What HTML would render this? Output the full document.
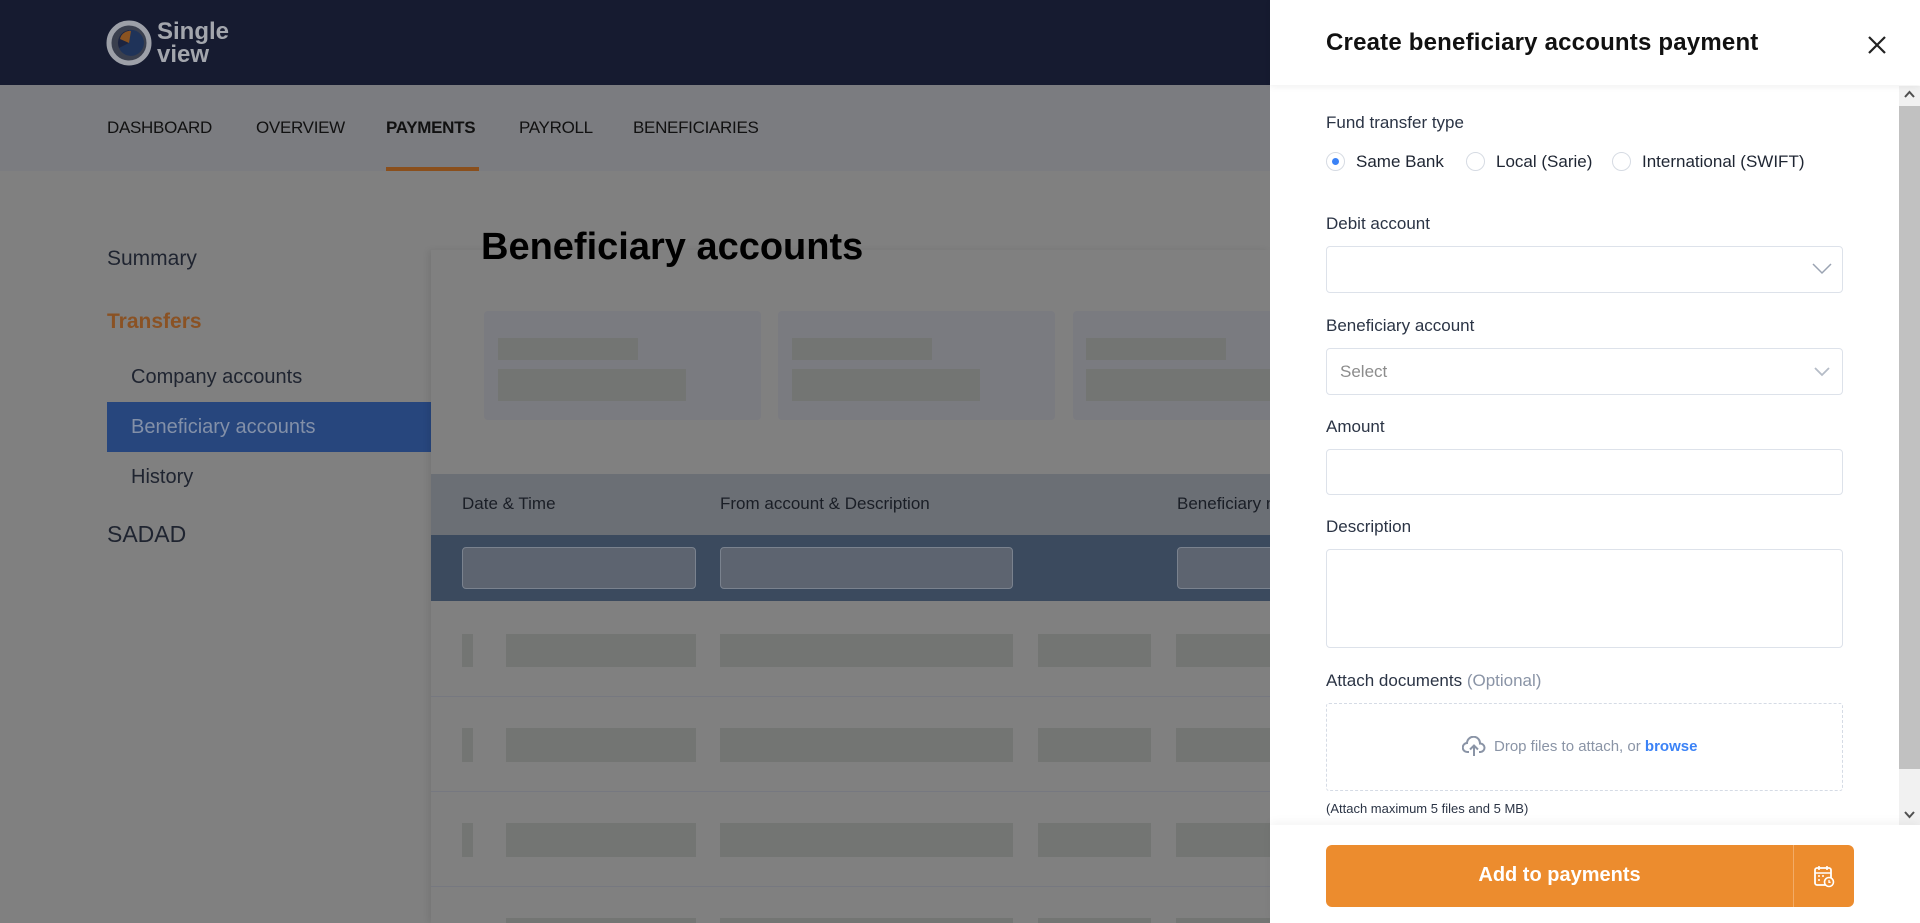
<!DOCTYPE html>
<html><head><meta charset="utf-8"><style>
*{box-sizing:border-box;margin:0;padding:0}
body{width:1920px;height:923px;overflow:hidden;background:#808080;font-family:"Liberation Sans",sans-serif;position:relative}
.a{position:absolute}
.top{left:0;top:0;width:1270px;height:85px;background:#161b30}
.nav{left:0;top:85px;width:1270px;height:86px;background:#7b7c80}
.nav span{position:absolute;top:33px;font-size:17px;color:#111;letter-spacing:-0.3px}
.side{font-size:21px;color:#1f2430}
.sk{background:#737573}
.card{background:#7a7b80;border-radius:4px}
.panel{left:1270px;top:0;width:650px;height:923px;background:#fff}
.lbl{font-size:17px;color:#2b3445;position:absolute;left:56px}
.inp{position:absolute;left:56px;width:517px;border:1px solid #dde2ea;border-radius:4px;background:#fff}
.radio{position:absolute;top:152px;width:19px;height:19px;border:1px solid #d6dbe3;border-radius:50%}
.rt{position:absolute;top:152px;font-size:17px;color:#1f2633}
</style></head><body>
<div class="a top"></div>
<svg class="a" style="left:106px;top:20px" width="46" height="46" viewBox="0 0 46 46"><circle cx="23" cy="23" r="20" fill="#3a3f4e" stroke="#9da0a8" stroke-width="5"/><path d="M23 10 A13 13 0 1 1 13 28 L23 23Z" fill="#1f3359"/><path d="M13 28 A13 13 0 0 1 23 10 L23 23Z" fill="#1c2440"/><path d="M14 19 A10 10 0 0 1 25 11 L23 23Z" fill="#8a5320"/></svg>
<div class="a" style="left:157px;top:20px;font-size:24px;font-weight:bold;color:#a3a6ad;line-height:23px">Single<br>view</div>
<div class="a nav">
<span style="left:107px">DASHBOARD</span><span style="left:256px">OVERVIEW</span><span style="left:386px;font-weight:bold">PAYMENTS</span><span style="left:519px">PAYROLL</span><span style="left:633px">BENEFICIARIES</span>
<div class="a" style="left:386px;top:82px;width:93px;height:4px;background:#8a4f1c"></div></div>
<div class="a side" style="left:107px;top:247px">Summary</div>
<div class="a side" style="left:107px;top:310px;color:#8a5224;font-weight:bold">Transfers</div>
<div class="a side" style="left:131px;top:366px;font-size:20px">Company accounts</div>
<div class="a" style="left:107px;top:402px;width:324px;height:50px;background:#27467d"></div>
<div class="a side" style="left:131px;top:416px;font-size:20px;color:#8390a8">Beneficiary accounts</div>
<div class="a side" style="left:131px;top:466px;font-size:20px">History</div>
<div class="a side" style="left:107px;top:521px;font-size:23px">SADAD</div>
<div class="a" style="left:431px;top:250px;width:839px;height:673px;box-shadow:-3px 0 6px rgba(0,0,0,0.08)"></div>
<div class="a" style="left:481px;top:226px;font-size:38px;font-weight:bold;color:#000">Beneficiary accounts</div>
<div class="a card" style="left:484px;top:311px;width:277px;height:109px"></div>
<div class="a card" style="left:778px;top:311px;width:277px;height:109px"></div>
<div class="a card" style="left:1073px;top:311px;width:200px;height:109px"></div>
<div class="a sk" style="left:498px;top:338px;width:140px;height:22px"></div><div class="a sk" style="left:498px;top:369px;width:188px;height:32px"></div>
<div class="a sk" style="left:792px;top:338px;width:140px;height:22px"></div><div class="a sk" style="left:792px;top:369px;width:188px;height:32px"></div>
<div class="a sk" style="left:1086px;top:338px;width:140px;height:22px"></div><div class="a sk" style="left:1086px;top:369px;width:184px;height:32px"></div>
<div class="a" style="left:431px;top:474px;width:839px;height:61px;background:#6b6f75"></div>
<div class="a" style="left:462px;top:494px;font-size:17px;color:#1a1e26">Date &amp; Time</div>
<div class="a" style="left:720px;top:494px;font-size:17px;color:#1a1e26">From account &amp; Description</div>
<div class="a" style="left:1177px;top:494px;font-size:17px;color:#1a1e26">Beneficiary n</div>
<div class="a" style="left:431px;top:535px;width:839px;height:66px;background:#3b4a5e"></div>
<div class="a" style="left:462px;top:547px;width:234px;height:42px;background:#5d6470;border:1px solid #7a828e;border-radius:4px"></div>
<div class="a" style="left:720px;top:547px;width:293px;height:42px;background:#5d6470;border:1px solid #7a828e;border-radius:4px"></div>
<div class="a" style="left:1177px;top:547px;width:100px;height:42px;background:#5d6470;border:1px solid #7a828e;border-radius:4px"></div>
<div class="a" style="left:431px;top:696px;width:839px;height:1px;background:#767880"></div>
<div class="a" style="left:431px;top:791px;width:839px;height:1px;background:#767880"></div>
<div class="a" style="left:431px;top:886px;width:839px;height:1px;background:#767880"></div>
<div class="a sk" style="left:462px;top:634px;width:11px;height:33px"></div><div class="a sk" style="left:506px;top:634px;width:190px;height:33px"></div><div class="a sk" style="left:720px;top:634px;width:293px;height:33px"></div><div class="a sk" style="left:1038px;top:634px;width:113px;height:33px"></div><div class="a sk" style="left:1176px;top:634px;width:94px;height:33px"></div>
<div class="a sk" style="left:462px;top:728px;width:11px;height:34px"></div><div class="a sk" style="left:506px;top:728px;width:190px;height:34px"></div><div class="a sk" style="left:720px;top:728px;width:293px;height:34px"></div><div class="a sk" style="left:1038px;top:728px;width:113px;height:34px"></div><div class="a sk" style="left:1176px;top:728px;width:94px;height:34px"></div>
<div class="a sk" style="left:462px;top:823px;width:11px;height:34px"></div><div class="a sk" style="left:506px;top:823px;width:190px;height:34px"></div><div class="a sk" style="left:720px;top:823px;width:293px;height:34px"></div><div class="a sk" style="left:1038px;top:823px;width:113px;height:34px"></div><div class="a sk" style="left:1176px;top:823px;width:94px;height:34px"></div>
<div class="a sk" style="left:506px;top:918px;width:190px;height:5px"></div><div class="a sk" style="left:720px;top:918px;width:293px;height:5px"></div><div class="a sk" style="left:1038px;top:918px;width:113px;height:5px"></div><div class="a sk" style="left:1176px;top:918px;width:94px;height:5px"></div>

<div class="a panel">
<div class="a" style="left:0;top:0;width:650px;height:85px;background:#fff;box-shadow:0 2px 6px rgba(0,0,0,0.06);z-index:2"></div>
<div class="a" style="left:56px;top:29px;font-size:24px;font-weight:bold;color:#111;z-index:3;letter-spacing:0.2px">Create beneficiary accounts payment</div>
<svg class="a" style="left:597px;top:35px;z-index:3" width="20" height="20" viewBox="0 0 20 20"><path d="M2 2L18 18M18 2L2 18" stroke="#222" stroke-width="2.2"/></svg>
<div class="lbl" style="top:113px">Fund transfer type</div>
<div class="radio" style="left:56px"><div style="position:absolute;left:5px;top:5px;width:7px;height:7px;border-radius:50%;background:#3b82f6"></div></div>
<div class="rt" style="left:86px">Same Bank</div>
<div class="radio" style="left:196px"></div><div class="rt" style="left:226px">Local (Sarie)</div>
<div class="radio" style="left:342px"></div><div class="rt" style="left:372px">International (SWIFT)</div>
<div class="lbl" style="top:214px">Debit account</div>
<div class="inp" style="top:246px;height:47px"><svg style="position:absolute;right:10px;top:16px" width="20" height="12" viewBox="0 0 20 12"><path d="M1 1L10 10L19 1" fill="none" stroke="#9aa3b2" stroke-width="1.5"/></svg></div>
<div class="lbl" style="top:316px">Beneficiary account</div>
<div class="inp" style="top:348px;height:47px"><span style="position:absolute;left:13px;top:13px;font-size:17px;color:#8c8c8c">Select</span><svg style="position:absolute;right:12px;top:18px" width="16" height="10" viewBox="0 0 16 10"><path d="M1 1L8 8L15 1" fill="none" stroke="#b5bcc7" stroke-width="1.8"/></svg></div>
<div class="lbl" style="top:417px">Amount</div>
<div class="inp" style="top:449px;height:46px"></div>
<div class="lbl" style="top:517px">Description</div>
<div class="inp" style="top:549px;height:99px"></div>
<div class="lbl" style="top:671px">Attach documents <span style="color:#8a94a6">(Optional)</span></div>
<div class="a" style="left:56px;top:703px;width:517px;height:88px;border:1px dashed #d5dbe5;border-radius:3px"></div>
<svg class="a" style="left:192px;top:736px" width="24" height="21" viewBox="0 0 24 21"><path d="M7 16H5.5A4.5 4.5 0 0 1 5 7 6.5 6.5 0 0 1 18 7.5 4 4 0 0 1 18.5 16H17" fill="none" stroke="#8a94a6" stroke-width="2"/><path d="M12 20V10M8 13.5L12 9.5 16 13.5" fill="none" stroke="#8a94a6" stroke-width="2"/></svg>
<div class="a" style="left:224px;top:738px;font-size:15px;color:#8a94a6">Drop files to attach, or <b style="color:#3b82f6">browse</b></div>
<div class="a" style="left:56px;top:801px;font-size:13px;color:#2b3445">(Attach maximum 5 files and 5 MB)</div>
<div class="a" style="left:629px;top:86px;width:21px;height:739px;background:#f1f1f1"></div>
<div class="a" style="left:629px;top:106px;width:21px;height:663px;background:#c1c1c1"></div>
<svg class="a" style="left:634px;top:90px" width="11" height="8" viewBox="0 0 11 8"><path d="M1 7L5.5 2 10 7" fill="none" stroke="#505050" stroke-width="2"/></svg>
<svg class="a" style="left:634px;top:811px" width="11" height="8" viewBox="0 0 11 8"><path d="M1 1L5.5 6 10 1" fill="none" stroke="#505050" stroke-width="2"/></svg>
<div class="a" style="left:0;top:825px;width:650px;height:98px;background:#fff;box-shadow:0 -4px 8px rgba(0,0,0,0.04)"></div>
<div class="a" style="left:56px;top:845px;width:528px;height:62px;background:#ec8c2e;border-radius:6px"></div>
<div class="a" style="left:523px;top:845px;width:1px;height:62px;background:#f2ab66"></div>
<div class="a" style="left:56px;top:864px;width:467px;text-align:center;font-size:20px;font-weight:bold;color:#fff">Add to payments</div>
<svg class="a" style="left:543px;top:864px" width="22" height="24" viewBox="0 0 22 24"><rect x="2" y="4" width="16" height="17" rx="2" fill="none" stroke="#fff" stroke-width="1.8"/><path d="M2 9H18M6 2V6M14 2V6M5 12h2M9 12h2M5 16h2" stroke="#fff" stroke-width="1.6"/><circle cx="16" cy="18" r="4.5" fill="#ec8c2e" stroke="#fff" stroke-width="1.6"/><path d="M16 16V18.3H17.6" stroke="#fff" stroke-width="1.3" fill="none"/></svg>
</div>
</body></html>
